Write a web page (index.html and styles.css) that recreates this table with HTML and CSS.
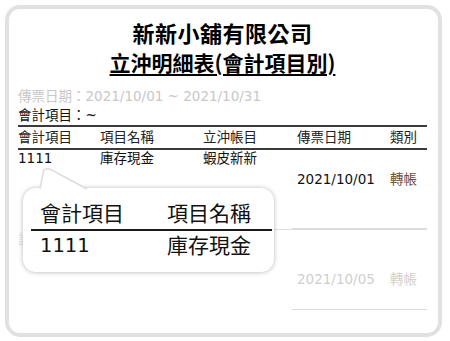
FILE: index.html
```html
<!DOCTYPE html>
<html lang="zh-Hant">
<head>
<meta charset="utf-8">
<link rel="stylesheet" href="styles.css">
</head>
<body>
<div class="frame">
  <h1 class="title">新新小舖有限公司</h1>
  <h2 class="subtitle"><span>立沖明細表(會計項目別)</span></h2>
  <div class="meta faded">傳票日期：2021/10/01 ~ 2021/10/31</div>
  <div class="meta">會計項目：~</div>
  <div class="table">
    <div class="row head">
      <div>會計項目</div><div>項目名稱</div><div>立沖帳目</div><div class="c4">傳票日期</div><div class="c5">類別</div>
    </div>
    <div class="row data">
      <div>1111</div><div>庫存現金</div><div>蝦皮新新</div><div class="c4"></div><div class="c5"></div>
    </div>
    <div class="row sub">
      <div></div><div></div><div></div><div class="c4">2021/10/01</div><div class="c5 kind">轉帳</div>
    </div>
    <div class="row total">
      <div></div><div></div><div></div><div class="c4 rule"></div><div class="c5 rule"></div>
    </div>
    <div class="row ghost">
      <div class="ghost-label">說</div><div class="rule-full"></div><div class="rule-full"></div><div class="c4 rule-full"></div><div class="c5 rule-full"></div>
    </div>
    <div class="row sub faded-row">
      <div></div><div></div><div></div><div class="c4 rule">2021/10/05</div><div class="c5 kind rule">轉帳</div>
    </div>
  </div>

  <div class="callout">
    <svg class="tail" width="56" height="24" viewBox="0 0 56 24">
      <path d="M2 24 L5.5 4 Q6 2 8 2 L11 2 Q12.5 2 14 3.2 L52 24 Z" fill="#fff"/>
      <path d="M2 22 L5.5 4 Q6 2 8 2 L11 2 Q12.5 2 14 3.2 L49 22" fill="none" stroke="#dcdcdc" stroke-width="1.5"/>
    </svg>
    <div class="callout-grid">
      <div class="ch">會計項目</div><div class="ch">項目名稱</div>
      <div class="cd num">1111</div><div class="cd">庫存現金</div>
    </div>
  </div>
</div>
</body>
</html>
```

FILE: styles.css
```css
* { box-sizing: border-box; }

html, body {
  margin: 0;
  padding: 0;
  background: #fff;
}

body {
  font-family: "DejaVu Sans", "Noto Sans CJK TC", sans-serif;
  color: #111;
  width: 450px;
  height: 341px;
  overflow: hidden;
}

.frame {
  position: relative;
  margin: 5px 0 0 5px;
  width: 437px;
  height: 332px;
  border: 4px solid #e1e1e1;
  border-radius: 15px;
  padding: 9px 11px 0 9px;
  overflow: hidden;
}

.title {
  margin: 0;
  text-align: center;
  font-family: "Noto Sans CJK TC", sans-serif;
  font-size: 22px;
  line-height: 28px;
  font-weight: 700;
  color: #000;
  letter-spacing: 0.5px;
}

.subtitle {
  margin: 2px 0 0;
  text-align: center;
  font-family: "Noto Sans CJK TC", sans-serif;
  font-size: 21px;
  line-height: 28px;
  font-weight: 700;
  color: #000;
}

.subtitle span {
  text-decoration: underline;
  text-decoration-thickness: 1.5px;
  text-underline-offset: 3px;
}

.meta {
  font-size: 13.5px;
  line-height: 19px;
}

.meta.faded {
  margin-top: 11px;
  color: #c8c8c8;
}

.table {
  font-size: 13.5px;
}

.row {
  display: grid;
  grid-template-columns: 82px 103px 94px 93px 1fr;
}

.row.head {
  border-top: 2px solid #3a3a3a;
  border-bottom: 2px solid #3a3a3a;
  line-height: 21px;
  color: #222;
}

.row.data {
  line-height: 16px;
}

.row.sub {
  line-height: 26px;
}

.kind {
  color: #6e4b3a;
}

.row.total {
  height: 37px;
}

.rule {
  border-bottom: 1.5px solid #dadada;
}

.c4.rule {
  margin-left: -5px;
  padding-left: 5px;
}

.row.ghost {
  height: 21px;
}

.rule-full {
  border-top: 1.5px solid #dedede;
}

.ghost-label {
  color: #e3e3e3;
  line-height: 16px;
  padding-top: 2px;
}

.faded-row {
  color: #cfcfcf;
}

.faded-row > div {
  height: 60px;
  padding-top: 16px;
}

.faded-row .kind {
  color: #d6d0cc;
}

.callout {
  position: absolute;
  left: 14px;
  top: 179px;
  width: 251px;
  height: 84px;
  background: #fff;
  border-radius: 13px;
  box-shadow: 0 0 4px rgba(0, 0, 0, 0.22), 0 1px 6px rgba(0, 0, 0, 0.08);
  padding: 12px 2px 0 8px;
}

.tail {
  position: absolute;
  left: 15px;
  top: -21px;
  display: block;
}

.callout-grid {
  display: grid;
  grid-template-columns: 127px 1fr;
  font-size: 21px;
}

.ch {
  padding-left: 9px;
  line-height: 29px;
  border-bottom: 2px solid #1a1a1a;
  color: #111;
}

.cd {
  padding-left: 9px;
  line-height: 30px;
  color: #111;
}

.cd.num {
  font-size: 19.5px;
}
```
